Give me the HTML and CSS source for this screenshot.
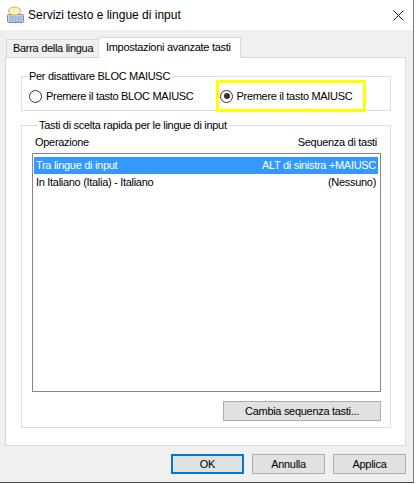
FILE: index.html
```html
<!DOCTYPE html>
<html lang="it">
<head>
    <meta charset="UTF-8">
    <meta name="viewport" content="width=device-width, initial-scale=1.0">
    <title>Servizi testo e lingue di input</title>
    <link rel="stylesheet" href="styles.css">
</head>
<body>
    <div class="window">
        <div class="titlebar">
            <svg class="app-icon" width="17" height="17" viewBox="0 0 17 17">
                <rect x="0.5" y="8.5" width="16" height="8" rx="1" fill="#c9d8ec" stroke="#6f8fb8"/>
                <path d="M2 11h13M2 13h13M2 15h13" stroke="#5f8fd0" stroke-width="1"/>
                <path d="M4 10v6M7 10v6M10 10v6M13 10v6" stroke="#c9d8ec" stroke-width="1"/>
                <ellipse cx="7.5" cy="5" rx="6" ry="4" fill="#fdf0b4" stroke="#c8b060"/>
                <path d="M4 8.5 L3 11 L6.5 8.8" fill="#fdf0b4" stroke="#c8b060" stroke-width="0.8"/>
            </svg>
            <span class="title">Servizi testo e lingue di input</span>
            <svg class="close" width="11" height="11" viewBox="0 0 11 11">
                <path d="M0.5 0.5 L10.5 10.5 M10.5 0.5 L0.5 10.5" stroke="#111" stroke-width="1"/>
            </svg>
        </div>

        <div class="content">
            <div class="tabs">
                <div class="tab">Barra della lingua</div>
                <div class="tab active">Impostazioni avanzate tasti</div>
            </div>

            <div class="panel">
                <fieldset class="group group-caps">
                    <legend>Per disattivare BLOC MAIUSC</legend>
                    <div class="radio-row">
                        <label class="radio">
                            <span class="circle"></span>
                            Premere il tasto BLOC MAIUSC
                        </label>
                        <label class="radio highlight">
                            <span class="circle checked"></span>
                            Premere il tasto MAIUSC
                        </label>
                    </div>
                </fieldset>

                <fieldset class="group group-keys">
                    <legend>Tasti di scelta rapida per le lingue di input</legend>
                    <div class="list-header">
                        <span>Operazione</span>
                        <span>Sequenza di tasti</span>
                    </div>
                    <div class="listbox">
                        <div class="list-row selected">
                            <span>Tra lingue di input</span>
                            <span>ALT di sinistra +MAIUSC</span>
                        </div>
                        <div class="list-row">
                            <span>In Italiano (Italia) - Italiano</span>
                            <span>(Nessuno)</span>
                        </div>
                    </div>
                    <div class="change-row">
                        <button class="btn btn-change">Cambia sequenza tasti...</button>
                    </div>
                </fieldset>
            </div>

            <div class="dialog-buttons">
                <button class="btn btn-default">OK</button>
                <button class="btn">Annulla</button>
                <button class="btn">Applica</button>
            </div>
        </div>
    </div>
</body>
</html>
```

FILE: styles.css
```css
html {
    background-color: #ffffff;
}

body {
    margin: 0;
    padding: 0;
    font-family: "Liberation Sans", Arial, sans-serif;
    font-size: 11px;
    letter-spacing: -0.3px;
    color: #000;
}

.window {
    width: 413px;
    height: 482px;
    border-right: 1px solid #7a7a7a;
    border-bottom: 1px solid #4d4d4d;
    background-color: #f0f0f0;
}

.titlebar {
    height: 30px;
    background-color: #ffffff;
    display: flex;
    align-items: center;
}

.app-icon {
    margin-left: 7px;
    margin-top: -1px;
}

.title {
    font-size: 12px;
    letter-spacing: 0;
    margin-left: 4px;
    flex: 1;
}

.close {
    margin-right: 9px;
}

.content {
    padding: 7px 7px 0 5px;
}

/* Onglets */
.tabs {
    display: flex;
    align-items: flex-end;
    height: 20px;
}

.tab {
    height: 18px;
    line-height: 17px;
    box-sizing: border-box;
    border: 1px solid #d9d9d9;
    border-bottom: none;
    background-color: #f0f0f0;
    padding: 0 6px;
    margin-left: 1px;
    width: 93px;
    white-space: nowrap;
}

.tab.active {
    height: 21px;
    line-height: 18px;
    width: 143px;
    margin-left: -1px;
    margin-bottom: -1px;
    padding: 0 7px;
    background-color: #ffffff;
    position: relative;
    z-index: 1;
}

.panel {
    height: 389px;
    box-sizing: border-box;
    background-color: #ffffff;
    border: 1px solid #d9d9d9;
    padding: 11px 14px 0 15px;
}

/* Cadres */
.group {
    margin: 0;
    padding: 0 0 4px 0;
    border: 1px solid #dcdcdc;
    min-width: 0;
}

.group legend {
    margin-left: 6px;
    padding: 0 1px;
    line-height: 14px;
}

.group-keys {
    margin-top: 7px;
    padding: 0 9px 6px 10px;
}

.radio-row {
    display: flex;
    align-items: center;
    height: 20px;
    margin-top: 3px;
    padding-left: 7px;
}

.radio {
    display: flex;
    align-items: center;
    gap: 4px;
    white-space: nowrap;
}

.circle {
    width: 11px;
    height: 11px;
    border: 1px solid #333;
    border-radius: 50%;
    background-color: #fff;
    position: relative;
}

.circle.checked::after {
    content: "";
    position: absolute;
    left: 2.5px;
    top: 2.5px;
    width: 6px;
    height: 6px;
    border-radius: 50%;
    background-color: #333;
}

.highlight {
    margin-left: 23px;
    box-sizing: border-box;
    width: 150px;
    height: 32px;
    margin-top: -6px;
    margin-bottom: -6px;
    border: 3px solid #ffff00;
    padding-left: 1px;
    gap: 3px;
}

/* Liste */
.list-header {
    display: flex;
    justify-content: space-between;
    line-height: 14px;
    margin-top: 3px;
    padding: 0 4px 0 3px;
}

.listbox {
    margin-top: 4px;
    height: 239px;
    box-sizing: border-box;
    border: 1px solid #828790;
    background-color: #ffffff;
    padding: 3px 2px 0 1px;
}

.list-row {
    display: flex;
    justify-content: space-between;
    line-height: 17px;
    padding: 0 2px;
}

.list-row.selected {
    background-color: #3399ff;
    color: #ffffff;
}

.change-row {
    display: flex;
    justify-content: flex-end;
    margin-top: 9px;
}

/* Boutons */
.btn {
    font-family: "Liberation Sans", Arial, sans-serif;
    font-size: 11px;
    letter-spacing: -0.3px;
    color: #000;
    background-color: #e1e1e1;
    border: 1px solid #adadad;
    height: 20px;
    width: 73px;
    padding: 0;
    margin: 0;
}

.btn-change {
    width: 158px;
}

.btn-default {
    border: 2px solid #0078d7;
}

.dialog-buttons {
    display: flex;
    justify-content: flex-end;
    gap: 8px;
    margin-top: 8px;
}
```
